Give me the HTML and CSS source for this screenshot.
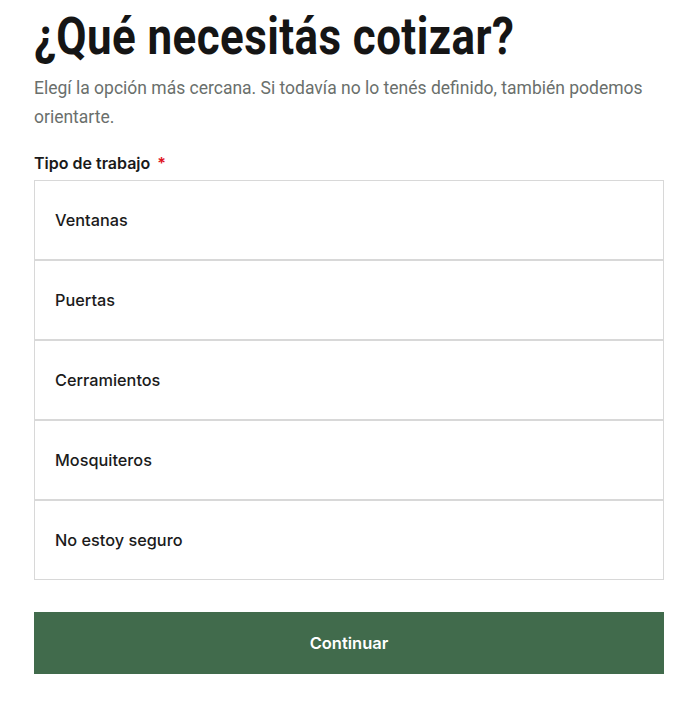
FILE: index.html
```html
<!DOCTYPE html>
<html lang="es">
<head>
<meta charset="utf-8">
<title>Cotizar</title>
<link rel="stylesheet" href="styles.css">
</head>
<body>
<main class="form">
  <h1 class="title"><span class="title-text">¿Qué necesitás cotizar?</span></h1>
  <p class="lead">Elegí la opción más cercana. Si todavía no lo tenés definido, también podemos orientarte.</p>
  <div class="label">Tipo de trabajo <span class="req">*</span></div>
  <div class="options">
    <div class="option">Ventanas</div>
    <div class="option">Puertas</div>
    <div class="option">Cerramientos</div>
    <div class="option">Mosquiteros</div>
    <div class="option">No estoy seguro</div>
  </div>
  <button class="submit" type="button">Continuar</button>
</main>
</body>
</html>
```
FILE: styles.css
```css
html, body {
  margin: 0;
  padding: 0;
  background: #ffffff;
}
.form {
  width: 630px;
  padding: 7px 0 0 34px;
  display: flex;
  flex-direction: column;
}
.title {
  margin: 0;
  height: 60px;
  font-family: Roboto, "Liberation Sans", sans-serif;
  font-weight: 700;
  font-size: 52px;
  line-height: 60px;
  color: #151515;
  white-space: nowrap;
}
.title-text {
  display: inline-block;
  transform: scaleX(0.845);
  transform-origin: left center;
  letter-spacing: 0.5px;
}
.lead {
  margin: 7px 0 0 0;
  font-family: Roboto, "Liberation Sans", sans-serif;
  font-size: 17.5px;
  line-height: 29px;
  color: #6a6f6c;
}
.label {
  margin-top: 21px;
  font-family: Inter, "Liberation Sans", sans-serif;
  font-size: 16px;
  line-height: 20px;
  font-weight: 600;
  color: #1a1a1a;
}
.req {
  color: #e0141e;
  margin-left: 3px;
}
.options {
  margin-top: 7px;
  display: flex;
  flex-direction: column;
}
.option {
  height: 78px;
  border: 1px solid #d8d8d8;
  display: flex;
  align-items: center;
  padding-left: 20px;
  font-family: Inter, "Liberation Sans", sans-serif;
  font-size: 16.3px;
  font-weight: 500;
  color: #1b1b1b;
}
.submit {
  margin-top: 32px;
  height: 62px;
  width: 630px;
  border: 0;
  background: #416b4c;
  color: #ffffff;
  font-family: Inter, "Liberation Sans", sans-serif;
  font-size: 16.5px;
  font-weight: 600;
  cursor: pointer;
}
```
